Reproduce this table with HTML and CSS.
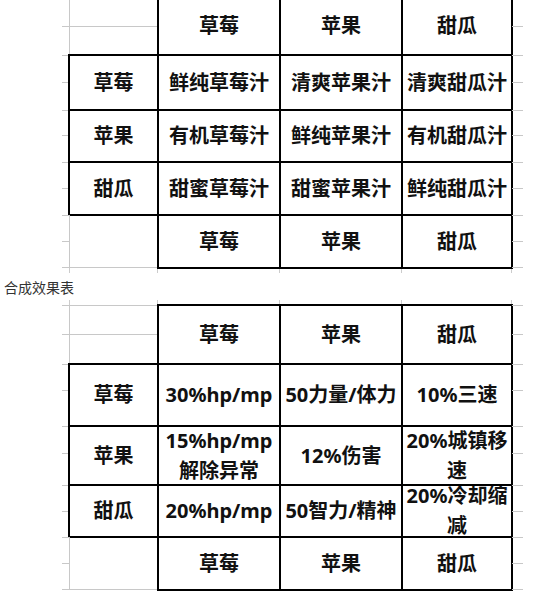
FILE: index.html
```html
<!DOCTYPE html>
<html lang="zh-CN">
<head>
<meta charset="utf-8">
<title>合成效果表</title>
<link rel="stylesheet" href="styles.css">
</head>
<body>
<div class="page">
  <div class="sheet t1">
    <div class="tk m29"></div><div class="corner corner-top"></div><div class="c">草莓</div><div class="c">苹果</div><div class="c">甜瓜</div><div class="tk m29"></div>
    <div class="tk m27"></div><div class="c">草莓</div><div class="c">鲜纯草莓汁</div><div class="c">清爽苹果汁</div><div class="c">清爽甜瓜汁</div><div class="tk m27"></div>
    <div class="tk m25"></div><div class="c">苹果</div><div class="c">有机草莓汁</div><div class="c">鲜纯苹果汁</div><div class="c">有机甜瓜汁</div><div class="tk m25"></div>
    <div class="tk m26"></div><div class="c">甜瓜</div><div class="c">甜蜜草莓汁</div><div class="c">甜蜜苹果汁</div><div class="c">鲜纯甜瓜汁</div><div class="tk m26"></div>
    <div class="tk m26 last"></div><div class="corner corner-bottom"></div><div class="c">草莓</div><div class="c">苹果</div><div class="c">甜瓜</div><div class="tk m26 last"></div>
  </div>

  <div class="gap">
    <p class="caption">合成效果表</p>
  </div>

  <div class="sheet t2">
    <div class="tk m29"></div><div class="corner corner-top corner-head"></div><div class="c">草莓</div><div class="c">苹果</div><div class="c">甜瓜</div><div class="tk m29"></div>
    <div class="tk m26"></div><div class="c">草莓</div><div class="c">30%hp/mp</div><div class="c">50力量/体力</div><div class="c">10%三速</div><div class="tk m26"></div>
    <div class="tk m27"></div><div class="c">苹果</div><div class="c">15%hp/mp<br>解除异常</div><div class="c">12%伤害</div><div class="c">20%城镇移<br>速</div><div class="tk m27"></div>
    <div class="tk m26"></div><div class="c">甜瓜</div><div class="c">20%hp/mp</div><div class="c">50智力/精神</div><div class="c">20%冷却缩<br>减</div><div class="tk m26"></div>
    <div class="tk m26 last"></div><div class="corner corner-bottom"></div><div class="c">草莓</div><div class="c">苹果</div><div class="c">甜瓜</div><div class="tk m26 last"></div>
  </div>
</div>
</body>
</html>
```

FILE: styles.css
```css
html, body {
  margin: 0;
  padding: 0;
  background: #ffffff;
}

.page {
  width: 537px;
  height: 595px;
  overflow: hidden;
}

.sheet {
  display: grid;
  grid-template-columns: 7px 89px 122px 122px 110px 11px;
  margin-left: 62px;
  font-family: "Noto Sans", "Noto Sans CJK SC", sans-serif;
  font-weight: 700;
  font-size: 20px;
  line-height: 30px;
  color: #111111;
}

.t1 {
  margin-top: -3px;
  grid-template-rows: 58px 55px 52px 53px 53px;
}

.t2 {
  grid-template-rows: 59px 62px 59px 52px 53px;
}

.c {
  display: flex;
  align-items: center;
  justify-content: center;
  text-align: center;
  overflow: hidden;
  white-space: nowrap;
  outline: 2px solid #000000;
  outline-offset: -1px;
}

/* spreadsheet grid ticks on both sides */
.tk {
  background-repeat: no-repeat;
  background-image:
    linear-gradient(#c8c8c8, #c8c8c8),
    linear-gradient(#c8c8c8, #c8c8c8);
  background-size: 100% 1px, 100% 1px;
  background-position: 0 0, 0 26px;
}
.tk.m25 { background-position: 0 0, 0 25px; }
.tk.m26 { background-position: 0 0, 0 26px; }
.tk.m27 { background-position: 0 0, 0 27px; }
.tk.m29 { background-position: 0 0, 0 29px; }

.tk.last {
  background-image:
    linear-gradient(#c8c8c8, #c8c8c8),
    linear-gradient(#c8c8c8, #c8c8c8),
    linear-gradient(#c8c8c8, #c8c8c8);
  background-size: 100% 1px, 100% 1px, 100% 1px;
  background-position: 0 0, 0 26px, 0 100%;
}

/* empty corner cells: only light gridlines */
.corner {
  box-sizing: border-box;
  border-left: 1px solid #c8c8c8;
}
.corner-top {
  background: linear-gradient(#c8c8c8, #c8c8c8) 0 29px / 100% 1px no-repeat;
}
.corner-head {
  border-top: 1px solid #c8c8c8;
  background-position: 0 28px;
}
.corner-bottom {
  border-bottom: 1px solid #c8c8c8;
}

.gap {
  height: 37px;
  background-repeat: no-repeat;
  background-image:
    linear-gradient(#cccccc, #cccccc),
    linear-gradient(#cccccc, #cccccc),
    linear-gradient(#cccccc, #cccccc),
    linear-gradient(#cccccc, #cccccc),
    linear-gradient(#cccccc, #cccccc),
    linear-gradient(#cccccc, #cccccc),
    linear-gradient(#cccccc, #cccccc),
    linear-gradient(#cccccc, #cccccc),
    linear-gradient(#cccccc, #cccccc),
    linear-gradient(#cccccc, #cccccc);
  background-size: 1px 5px;
  background-position:
    69px 0, 157px 0, 279px 0, 401px 0, 511px 0,
    69px 100%, 157px 100%, 279px 100%, 401px 100%, 511px 100%;
}

.caption {
  margin: 0;
  padding: 11px 0 0 4px;
  font-family: "Noto Sans CJK SC", sans-serif;
  font-weight: 400;
  font-size: 14px;
  line-height: 16px;
  color: #333333;
}
```
